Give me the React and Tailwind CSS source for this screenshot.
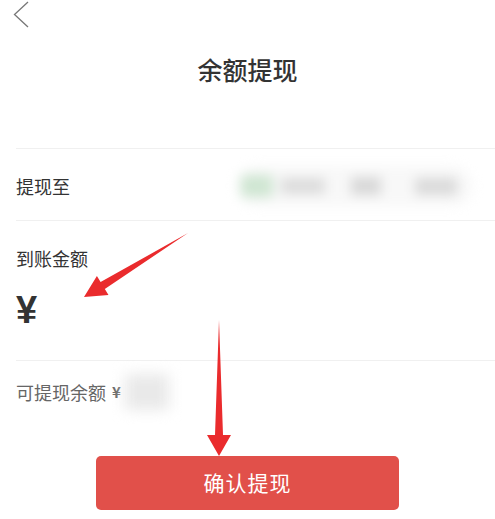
import React from "react";

const font = { fontFamily: '"Noto Sans CJK SC", "Noto Sans", sans-serif' };

const Arrows = () => (
  <svg className="pointer-events-none absolute left-0 top-0" width="495" height="519" viewBox="0 0 495 519">
    <polygon
      points="188,233 104.8,288.9 108.5,294.9 84,297 96.9,276.1 100.6,282.1"
      fill="#ea2b2d"
    />
    <polygon points="219,320 223,435 231,435 219,456 207,435 215,435" fill="#ea2b2d" />
  </svg>
);

const App = () => {
  return (
    <div className="relative w-[495px] h-[519px] bg-white overflow-hidden text-[#333]" style={font}>
      <div className="h-[30px] flex items-start pl-[13px]">
        <svg width="18" height="30" viewBox="0 0 18 30">
          <polyline points="15,2 1.5,14.5 15,27" fill="none" stroke="#777" strokeWidth="1.3" />
        </svg>
      </div>
      <h1 className="mt-[21px] text-center text-[25px] leading-[36px] font-medium text-[#333]">余额提现</h1>
      <div className="h-[61px]" />

      <div className="pl-4">
        <div className="h-[72px] border-t border-[#f0f0f0] flex items-center pt-[3px]">
          <span className="text-[18px] leading-[26px]">提现至</span>
          <div className="ml-[167px] flex items-center h-[40px] w-[235px] bg-[#f8f8f8] blur-[6px] rounded-full">
            <div className="w-[32px] h-[22px] bg-[#cfe6d2] ml-[4px]" />
            <div className="w-[44px] h-[16px] bg-[#dcdcdc] ml-[8px]" />
            <div className="w-[30px] h-[18px] bg-[#d8d8d8] ml-[26px]" />
            <div className="w-[42px] h-[17px] bg-[#dadada] ml-[34px]" />
          </div>
        </div>

        <div className="border-t border-[#f0f0f0] pt-[24px] pb-[28px]">
          <div className="text-[18px] leading-[26px]">到账金额</div>
          <div className="mt-[17px] text-[38px] leading-[44px] font-bold text-[#333]" style={{ fontFamily: '"Liberation Sans", sans-serif' }}>
            ¥
          </div>
        </div>

        <div className="h-[45px] border-t border-[#f0f0f0] pt-[18px] flex items-center">
          <span className="text-[18px] leading-[26px] text-[#666]">可提现余额</span>
          <span className="ml-[6px] text-[15px] leading-[26px] font-bold text-[#666]">¥</span>
          <div className="ml-[4px] w-[44px] h-[36px] shrink-0 bg-[#e9e9e9] blur-[7px]" />
        </div>
      </div>

      <button className="block mx-auto mt-[51px] w-[303px] h-[54px] rounded-[5px] bg-[#e1504a] text-white text-[21px] tracking-[1px]">
        确认提现
      </button>

      <Arrows />
    </div>
  );
};

export default App;
